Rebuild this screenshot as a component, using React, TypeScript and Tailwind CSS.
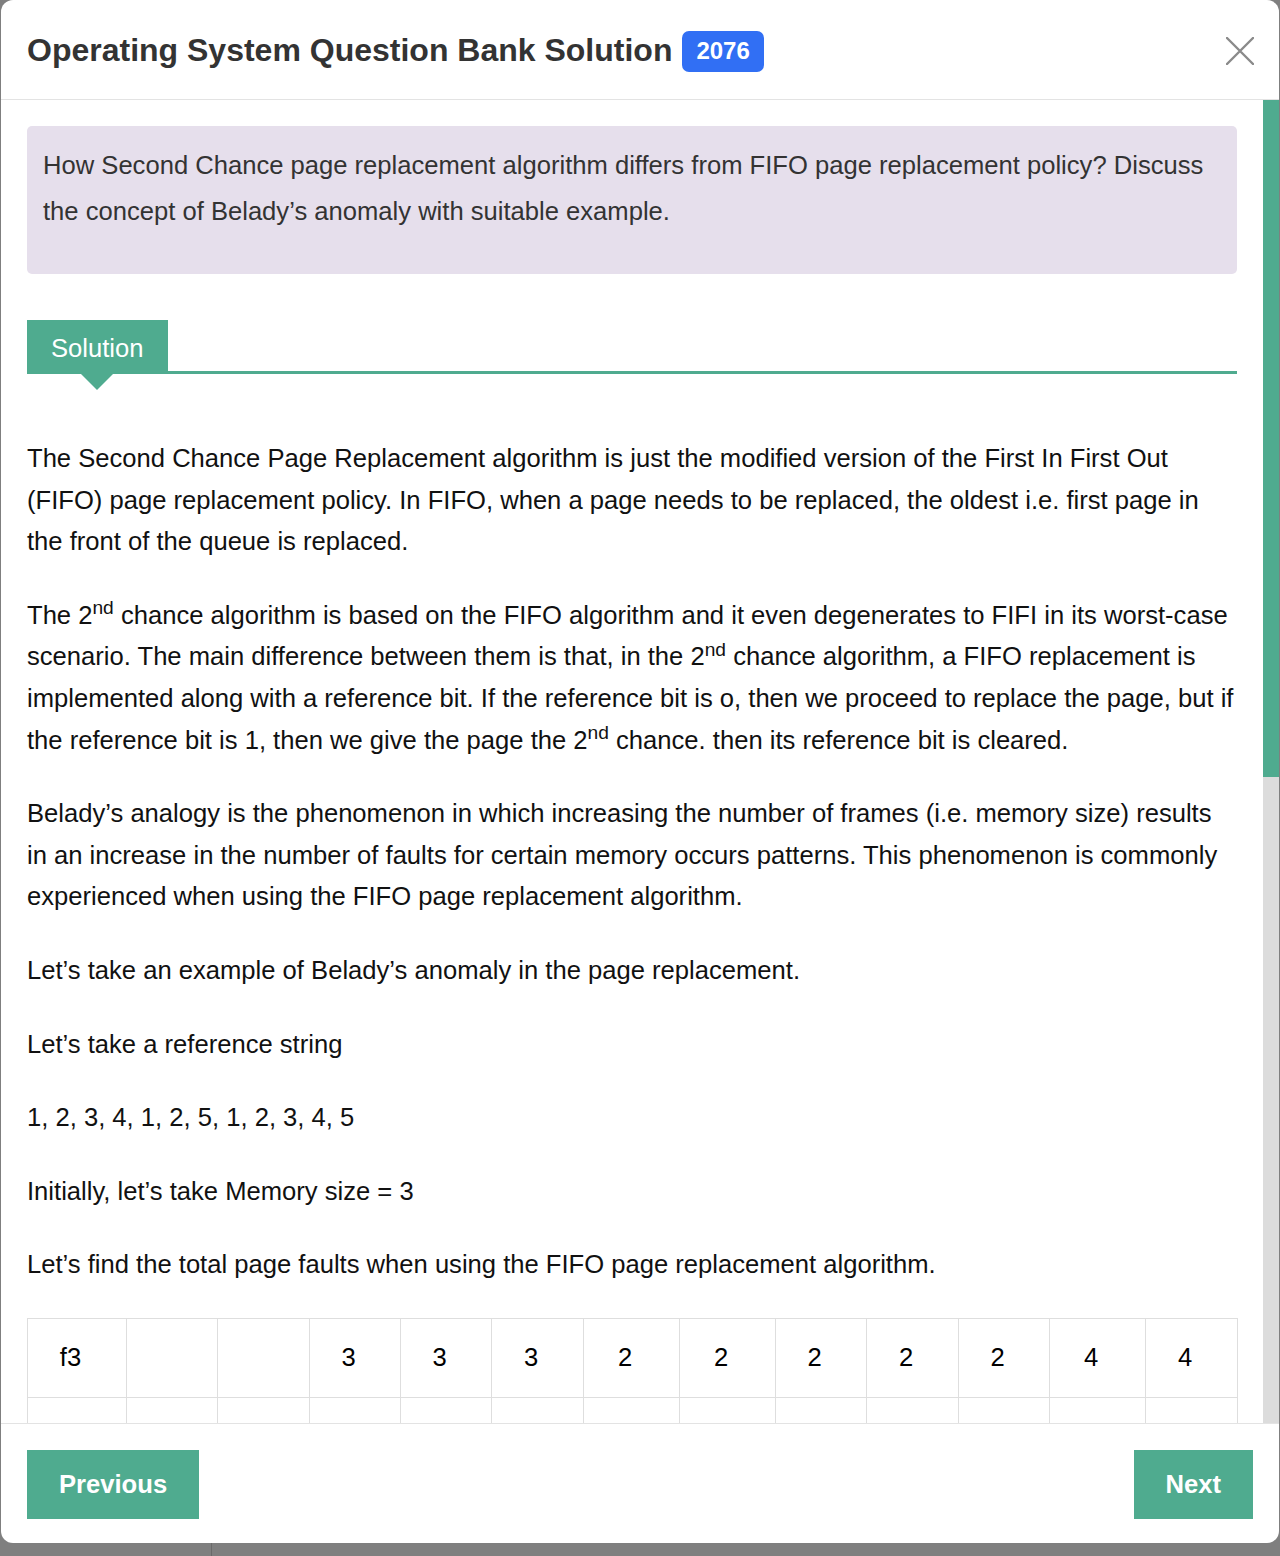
import React from 'react';

const firstRow = ['f3', '', '', '3', '3', '3', '2', '2', '2', '2', '2', '4', '4'];

const colWidths = [
  'w-[99px]', 'w-[91px]', 'w-[92px]', 'w-[91px]', 'w-[91px]', 'w-[92px]', 'w-[96px]',
  'w-[96px]', 'w-[91px]', 'w-[92px]', 'w-[91px]', 'w-[96px]', 'w-[92px]',
];

function CloseIcon() {
  return (
    <svg width="28" height="28" viewBox="0 0 28 28" fill="none">
      <path d="M1 1L27 27M27 1L1 27" stroke="#8a8a8a" strokeWidth="2.4" strokeLinecap="round" />
    </svg>
  );
}

export default function App() {
  return (
    <div className="h-[1556px] w-[1280px] overflow-hidden bg-[#7f7f7f] font-['Liberation_Sans',Arial,sans-serif]">
      <div className="ml-[1px] flex h-[1543px] w-[1278px] flex-col overflow-hidden rounded-[12px] bg-white">
        {/* header */}
        <div className="flex h-[100px] shrink-0 items-center justify-between border-b border-[#e3e3e3] pl-[26px] pr-[24px]">
          <div className="flex items-center gap-[10px]">
            <h1 className="text-[32px] font-bold leading-none text-[#333]">
              Operating System Question Bank Solution
            </h1>
            <span className="mt-[3px] flex h-[41px] items-center rounded-[7px] bg-[#316ff4] px-[14px] text-[24px] font-bold leading-none text-white">
              2076
            </span>
          </div>
          <button className="mt-[2px] flex h-[30px] w-[30px] items-center justify-center">
            <CloseIcon />
          </button>
        </div>

        {/* body */}
        <div className="flex min-h-0 flex-1">
          <div className="flex-1 overflow-hidden px-[26px] pt-[26px] text-[25.6px] leading-[41.6px] text-[#111]">
            <div className="rounded-[5px] bg-[#e6dfec] px-[16px] pb-[40px] pt-[16px]">
              <p className="leading-[46px] text-[#333]">
                How Second Chance page replacement algorithm differs from FIFO page replacement policy? Discuss the
                concept of Belady’s anomaly with suitable example.
              </p>
            </div>

            <div className="mt-[46px] flex items-end">
              <div className="relative flex h-[54px] items-center bg-[#4fab8f] px-[24px] pt-[3px] text-white">
                Solution
                <span className="absolute left-1/2 top-full h-0 w-0 -translate-x-1/2 border-l-[16px] border-r-[16px] border-t-[16px] border-l-transparent border-r-transparent border-t-[#4fab8f]" />
              </div>
              <div className="h-[3px] flex-1 bg-[#4fab8f]" />
            </div>

            <div className="mt-[64px] flex flex-col gap-[32px]">
              <p>
                The Second Chance Page Replacement algorithm is just the modified version of the First In First Out
                (FIFO) page replacement policy. In FIFO, when a page needs to be replaced, the oldest i.e. first page
                in the front of the queue is replaced.
              </p>
              <p>
                The 2<sup>nd</sup> chance algorithm is based on the FIFO algorithm and it even degenerates to FIFI in
                its worst-case scenario. The main difference between them is that, in the 2<sup>nd</sup> chance
                algorithm, a FIFO replacement is implemented along with a reference bit. If the reference bit is o,
                then we proceed to replace the page, but if the reference bit is 1, then we give the page the 2
                <sup>nd</sup> chance. then its reference bit is cleared.
              </p>
              <p>
                Belady’s analogy is the phenomenon in which increasing the number of frames (i.e. memory size) results
                in an increase in the number of faults for certain memory occurs patterns. This phenomenon is commonly
                experienced when using the FIFO page replacement algorithm.
              </p>
              <p>Let’s take an example of Belady’s anomaly in the page replacement.</p>
              <p>Let’s take a reference string</p>
              <p>1, 2, 3, 4, 1, 2, 5, 1, 2, 3, 4, 5</p>
              <p>Initially, let’s take Memory size = 3</p>
              <p>Let’s find the total page faults when using the FIFO page replacement algorithm.</p>
            </div>

            <table className="mt-[32px] w-[1210px] table-fixed border-collapse">
              <colgroup>
                {colWidths.map((w, i) => (
                  <col key={i} className={w} />
                ))}
              </colgroup>
              <tbody>
                <tr className="h-[79px]">
                  {firstRow.map((cell, c) => (
                    <td key={c} className="border border-[#dedede] pr-[13px] text-center text-black">
                      {cell}
                    </td>
                  ))}
                </tr>
                <tr className="h-[79px]">
                  {firstRow.map((_, c) => (
                    <td key={c} className="border border-[#dedede]" />
                  ))}
                </tr>
              </tbody>
            </table>
          </div>

          {/* scrollbar */}
          <div className="flex w-[16px] shrink-0 flex-col bg-[#dcdcdc]">
            <div className="h-[677px] bg-[#4fab8f]" />
          </div>
        </div>

        {/* footer */}
        <div className="flex h-[120px] shrink-0 items-center justify-between border-t border-[#e3e3e3] pl-[26px] pr-[26px] pt-[2px]">
          <button className="flex h-[69px] items-center bg-[#4fab8f] px-[32px] text-[25.6px] font-bold text-white">
            Previous
          </button>
          <button className="flex h-[69px] items-center bg-[#4fab8f] px-[32px] text-[25.6px] font-bold text-white">
            Next
          </button>
        </div>
      </div>
      <div className="flex h-[13px]">
        <div className="ml-[211px] w-[1px] bg-[#6a6a6a]" />
      </div>
    </div>
  );
}
